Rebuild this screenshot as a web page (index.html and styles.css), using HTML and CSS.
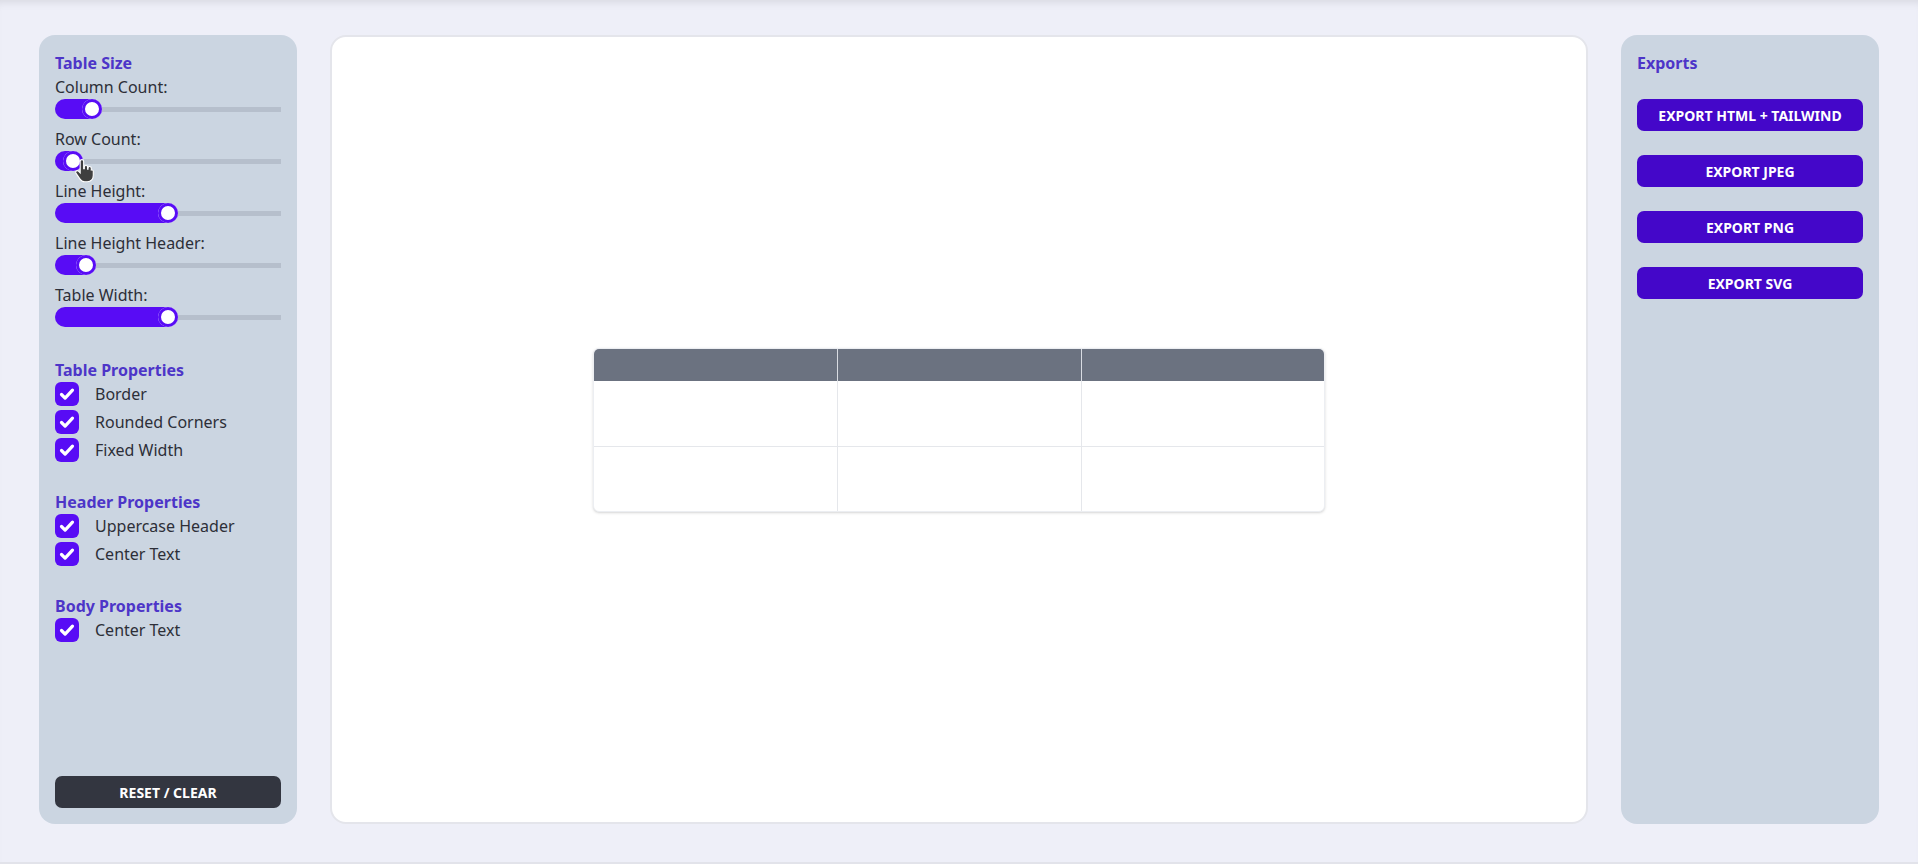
FILE: index.html
```html
<!DOCTYPE html>
<html lang="en">
<head>
<meta charset="utf-8">
<title>Table Builder</title>
<link rel="stylesheet" href="styles.css">
</head>
<body>
<div class="page">
  <aside class="panel panel-left">
    <h2 class="section-title">Table Size</h2>
    <div class="field">
      <div class="field-label">Column Count:</div>
      <div class="range"><div class="range-fill" style="width:47px"><span class="range-thumb"></span></div></div>
    </div>
    <div class="field">
      <div class="field-label">Row Count:</div>
      <div class="range"><div class="range-fill" style="width:28px"><span class="range-thumb"></span></div></div>
    </div>
    <div class="field">
      <div class="field-label">Line Height:</div>
      <div class="range"><div class="range-fill" style="width:123px"><span class="range-thumb"></span></div></div>
    </div>
    <div class="field">
      <div class="field-label">Line Height Header:</div>
      <div class="range"><div class="range-fill" style="width:41px"><span class="range-thumb"></span></div></div>
    </div>
    <div class="field">
      <div class="field-label">Table Width:</div>
      <div class="range"><div class="range-fill" style="width:123px"><span class="range-thumb"></span></div></div>
    </div>

    <h2 class="section-title section-gap-lg">Table Properties</h2>
    <div class="check-list">
      <div class="check"><span class="box"><svg viewBox="0 0 24 24"><path d="M6.5 12.5l3.6 3.6 7.4-8"/></svg></span><span>Border</span></div>
      <div class="check"><span class="box"><svg viewBox="0 0 24 24"><path d="M6.5 12.5l3.6 3.6 7.4-8"/></svg></span><span>Rounded Corners</span></div>
      <div class="check"><span class="box"><svg viewBox="0 0 24 24"><path d="M6.5 12.5l3.6 3.6 7.4-8"/></svg></span><span>Fixed Width</span></div>
    </div>

    <h2 class="section-title section-gap">Header Properties</h2>
    <div class="check-list">
      <div class="check"><span class="box"><svg viewBox="0 0 24 24"><path d="M6.5 12.5l3.6 3.6 7.4-8"/></svg></span><span>Uppercase Header</span></div>
      <div class="check"><span class="box"><svg viewBox="0 0 24 24"><path d="M6.5 12.5l3.6 3.6 7.4-8"/></svg></span><span>Center Text</span></div>
    </div>

    <h2 class="section-title section-gap">Body Properties</h2>
    <div class="check-list">
      <div class="check"><span class="box"><svg viewBox="0 0 24 24"><path d="M6.5 12.5l3.6 3.6 7.4-8"/></svg></span><span>Center Text</span></div>
    </div>

    <button class="btn btn-dark">RESET / CLEAR</button>
  </aside>

  <main class="canvas">
    <div class="table">
      <div class="t-row t-head"><div class="t-cell"></div><div class="t-cell"></div><div class="t-cell"></div></div>
      <div class="t-row t-body"><div class="t-cell"></div><div class="t-cell"></div><div class="t-cell"></div></div>
      <div class="t-row t-body"><div class="t-cell"></div><div class="t-cell"></div><div class="t-cell"></div></div>
    </div>
  </main>

  <aside class="panel panel-right">
    <h2 class="section-title">Exports</h2>
    <div class="export-list">
      <button class="btn btn-primary">EXPORT HTML + TAILWIND</button>
      <button class="btn btn-primary">EXPORT JPEG</button>
      <button class="btn btn-primary">EXPORT PNG</button>
      <button class="btn btn-primary">EXPORT SVG</button>
    </div>
  </aside>
</div>
<div class="page-end"></div>

<svg class="cursor" viewBox="0 0 18 22" width="20" height="24">
  <path d="M5.5 2.2a1.6 1.6 0 0 1 3.2 0V9h0.6V7.4a1.5 1.5 0 0 1 3 0V9.4h0.4V8.4a1.5 1.5 0 0 1 3 0V10a1.4 1.4 0 0 1 1.8 1.3V15c0 3.5-2.2 5.8-5.6 5.8H9.6c-2.2 0-3.4-1-4.4-2.6L1.6 13a1.5 1.5 0 0 1 2.3-1.9l1.6 1.6Z" fill="#3f3f3f" stroke="#ffffff" stroke-width="1"/>
</svg>
</body>
</html>
```

FILE: styles.css
```css
* { box-sizing: border-box; }

html, body {
  margin: 0;
  padding: 0;
}

body {
  background: #eeeff8;
  font-family: "Noto Sans", "Open Sans", sans-serif;
  color: #2d2f38;
  width: 1918px;
  height: 864px;
  overflow: hidden;
  position: relative;
}

.page {
  height: 862px;
  padding: 35px 39px 38px 39px;
  display: flex;
  gap: 33px;
  box-shadow: inset 0 8px 8px -6px rgba(0, 0, 0, 0.10);
}

.page-end {
  height: 2px;
  background: #e2e3ea;
}

.panel {
  width: 258px;
  flex: none;
  background: #cbd5e1;
  border-radius: 16px;
  padding: 16px;
  display: flex;
  flex-direction: column;
}

.section-title {
  margin: 0;
  font-size: 16px;
  line-height: 24px;
  font-weight: 700;
  color: #4d35c8;
}

.section-gap-lg { margin-top: 23px; }
.section-gap { margin-top: 28px; }

.field {
  display: flex;
  flex-direction: column;
  margin-bottom: 8px;
}

.field-label {
  font-size: 16px;
  line-height: 24px;
  color: #2d2f38;
}

.range {
  height: 20px;
  width: 100%;
  background: linear-gradient(#b6bfcc, #b6bfcc) center / 100% 5px no-repeat;
  border-radius: 3px;
}

.range-fill {
  height: 20px;
  background: #580cf5;
  border-radius: 10px;
  display: flex;
  justify-content: flex-end;
}

.range-thumb {
  width: 20px;
  height: 20px;
  border-radius: 50%;
  background: #ffffff;
  box-shadow: inset 0 0 0 3px #580cf5;
  flex: none;
}

.check-list {
  display: flex;
  flex-direction: column;
  gap: 4px;
}

.check {
  display: flex;
  align-items: center;
  gap: 16px;
  font-size: 16px;
  line-height: 24px;
  color: #2d2f38;
}

.box {
  width: 24px;
  height: 24px;
  border-radius: 6px;
  background: #580cf5;
  flex: none;
  display: flex;
}

.box svg {
  width: 24px;
  height: 24px;
  fill: none;
  stroke: #ffffff;
  stroke-width: 3.2;
  stroke-linecap: round;
  stroke-linejoin: round;
}

.btn {
  display: block;
  width: 100%;
  height: 32px;
  border: none;
  border-radius: 7px;
  font-family: "Noto Sans", "Open Sans", sans-serif;
  font-size: 14px;
  font-weight: 700;
  color: #ffffff;
  letter-spacing: 0;
  padding: 0;
}

.btn-dark {
  margin-top: auto;
  background: #333640;
}

.export-list {
  margin-top: 24px;
  display: flex;
  flex-direction: column;
  gap: 24px;
}

.btn-primary {
  background: #4407c9;
}

.canvas {
  flex: 1;
  background: #ffffff;
  border: 2px solid #e4e5eb;
  border-radius: 16px;
  display: flex;
  align-items: center;
  justify-content: center;
}

.table {
  width: 732px;
  border-radius: 6px;
  overflow: hidden;
  background: #ffffff;
  box-shadow: 0 1px 3px rgba(0, 0, 0, 0.14), 0 1px 2px -1px rgba(0, 0, 0, 0.1);
  border: 1px solid #eceef2;
  display: flex;
  flex-direction: column;
}

.t-row {
  display: grid;
  grid-template-columns: 1fr 1fr 1fr;
}

.t-head {
  height: 32px;
  background: #6b7280;
}

.t-head .t-cell + .t-cell {
  border-left: 1px solid #d9dce2;
}

.t-body {
  height: 65px;
}

.t-body + .t-body {
  border-top: 1px solid #e5e7eb;
}

.t-body .t-cell + .t-cell {
  border-left: 1px solid #e5e7eb;
}

.cursor {
  position: absolute;
  left: 74px;
  top: 159px;
}
```
